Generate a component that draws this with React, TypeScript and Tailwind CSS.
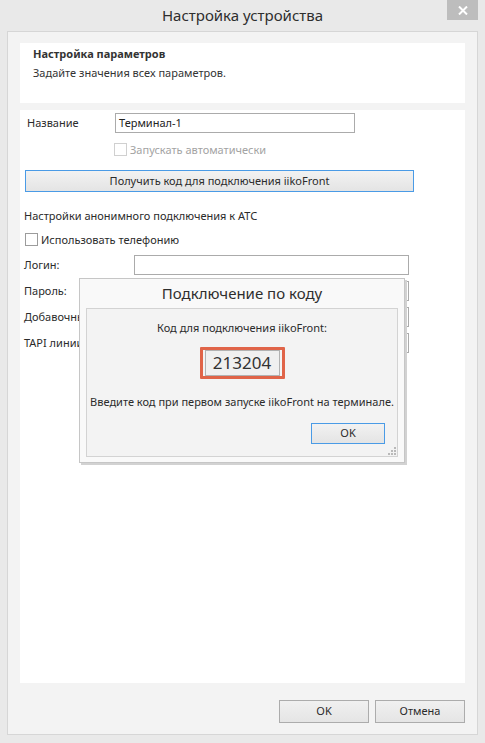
import React from 'react';

const FONT = { fontFamily: '"Noto Sans", "Open Sans", sans-serif' };

// Classic win8 style input box
const Field: React.FC<{ value?: string; className?: string }> = ({ value = '', className = '' }) => (
  <div className={`border border-[#ababab] bg-white flex items-center px-[3px] text-[11px] text-[#222] ${className}`}>
    {value}
  </div>
);

const Check: React.FC<{ label: string; disabled?: boolean }> = ({ label, disabled }) => (
  <div className="flex items-center gap-[3px] h-[13px]">
    <span className={`w-[13px] h-[13px] border bg-white shrink-0 ${disabled ? 'border-[#d0d0d0]' : 'border-[#9c9c9c]'}`} />
    <span className={`text-[11px] leading-[13px] whitespace-nowrap ${disabled ? 'text-[#a3a3a3]' : 'text-[#2b2b2b]'}`}>{label}</span>
  </div>
);

const FORM_ROWS = ['Логин:', 'Пароль:', 'Добавочный номер:', 'TAPI линии:'];

export default function App() {
  return (
    <div className="w-[485px] h-[743px] bg-[#e9e9e9] flex flex-col relative overflow-hidden" style={FONT}>
      {/* title bar */}
      <div className="h-[31px] relative flex items-center justify-center shrink-0">
        <span className="text-[15px] text-[#2e2e2e] -mt-[1px]">Настройка устройства</span>
        <div className="absolute right-[7px] top-0 w-[31px] h-[20px] bg-[#bdbdbd] flex items-center justify-center">
          <svg width="10" height="9" viewBox="0 0 10 9">
            <path d="M1 0.5 L9 8.5 M9 0.5 L1 8.5" stroke="#fff" strokeWidth="2" />
          </svg>
        </div>
      </div>

      {/* client area */}
      <div className="mx-[7px] h-[704px] border border-[#d6d6d6] bg-[#f3f3f3] flex flex-col px-[12px] pt-[11px]">
        <div className="h-[60px] bg-white pl-[13px] pt-[2px] shrink-0">
          <div className="text-[11px] font-bold text-[#333] leading-[16px] pt-[1px]">Настройка параметров</div>
          <div className="text-[11px] text-[#333] leading-[16px] mt-[3px]">Задайте значения всех параметров.</div>
        </div>

        <div className="mt-[7px] h-[573px] bg-white pl-[4px] pt-[3px] shrink-0">
          <div className="flex items-center pl-[3px] h-[20px]">
            <span className="w-[88px] text-[11px] text-[#2b2b2b]">Название</span>
            <Field value="Терминал-1" className="w-[240px] h-[20px]" />
          </div>
          <div className="mt-[10px] pl-[90px]">
            <Check label="Запускать автоматически" disabled />
          </div>
          <div className="mt-[14px] ml-[1px] w-[389px] h-[22px] border border-[#4a9be6] bg-gradient-to-b from-[#f2f2f2] to-[#e4e4e4] flex items-center justify-center text-[11px] text-[#2b2b2b]">
            Получить код для подключения iikoFront
          </div>
          <div className="mt-[16px] h-[16px] text-[11px] text-[#2b2b2b] leading-[16px]">Настройки анонимного подключения к АТС</div>
          <div className="mt-[9px] pl-[1px]">
            <Check label="Использовать телефонию" />
          </div>
          <div className="mt-[9px] flex flex-col gap-[6px]">
            {FORM_ROWS.map((r) => (
              <div key={r} className="flex items-center h-[20px]">
                <span className="w-[110px] text-[11px] text-[#2b2b2b] whitespace-nowrap">{r}</span>
                <Field className="w-[275px] h-[20px]" />
              </div>
            ))}
          </div>
        </div>

        <div className="mt-[17px] flex justify-end gap-[6px]">
          <div className="w-[90px] h-[23px] border border-[#acacac] bg-gradient-to-b from-[#f0f0f0] to-[#e5e5e5] flex items-center justify-center text-[11px] text-[#2b2b2b]">OK</div>
          <div className="w-[90px] h-[23px] border border-[#acacac] bg-gradient-to-b from-[#f0f0f0] to-[#e5e5e5] flex items-center justify-center text-[11px] text-[#2b2b2b]">Отмена</div>
        </div>
      </div>

      {/* modal "connect by code" on top of the form */}
      <div className="absolute left-[79px] top-[278px] w-[326px] h-[185px] bg-[#f9f9f9] border border-[#c6c6c6] shadow-[2px_2px_0_#d2d2d2] flex flex-col px-[6px]">
        <div className="h-[29px] flex items-center justify-center text-[15px] text-[#2e2e2e]">Подключение по коду</div>
        <div className="h-[149px] border border-[#d3d3d3] bg-[#f3f3f3] flex flex-col items-center relative">
          <div className="mt-[11px] h-[16px] leading-[16px] text-[11px] text-[#2b2b2b]">Код для подключения iikoFront:</div>
          <div className="mt-[11px] border-[3px] border-[#e06448] px-[2px] rounded-[1px]">
            <div className="w-[75px] h-[26px] border border-[#b2b2b2] bg-[#f0f0f0] flex items-center justify-center text-[17px] text-[#333]">213204</div>
          </div>
          <div className="mt-[15px] h-[16px] leading-[16px] text-[11px] text-[#2b2b2b] whitespace-nowrap">Введите код при первом запуске iikoFront на терминале.</div>
          <div className="self-end mr-[12px] mt-[13px] w-[74px] h-[21px] border border-[#4a9be6] bg-gradient-to-b from-[#f2f2f2] to-[#e4e4e4] flex items-center justify-center text-[11px] text-[#2b2b2b]">OK</div>
          <svg className="absolute right-[1px] bottom-[1px]" width="8" height="8" viewBox="0 0 8 8" fill="#b9b9b9">
            <rect x="6" y="0" width="2" height="2" />
            <rect x="3" y="3" width="2" height="2" />
            <rect x="6" y="3" width="2" height="2" />
            <rect x="0" y="6" width="2" height="2" />
            <rect x="3" y="6" width="2" height="2" />
            <rect x="6" y="6" width="2" height="2" />
          </svg>
        </div>
      </div>
    </div>
  );
}
